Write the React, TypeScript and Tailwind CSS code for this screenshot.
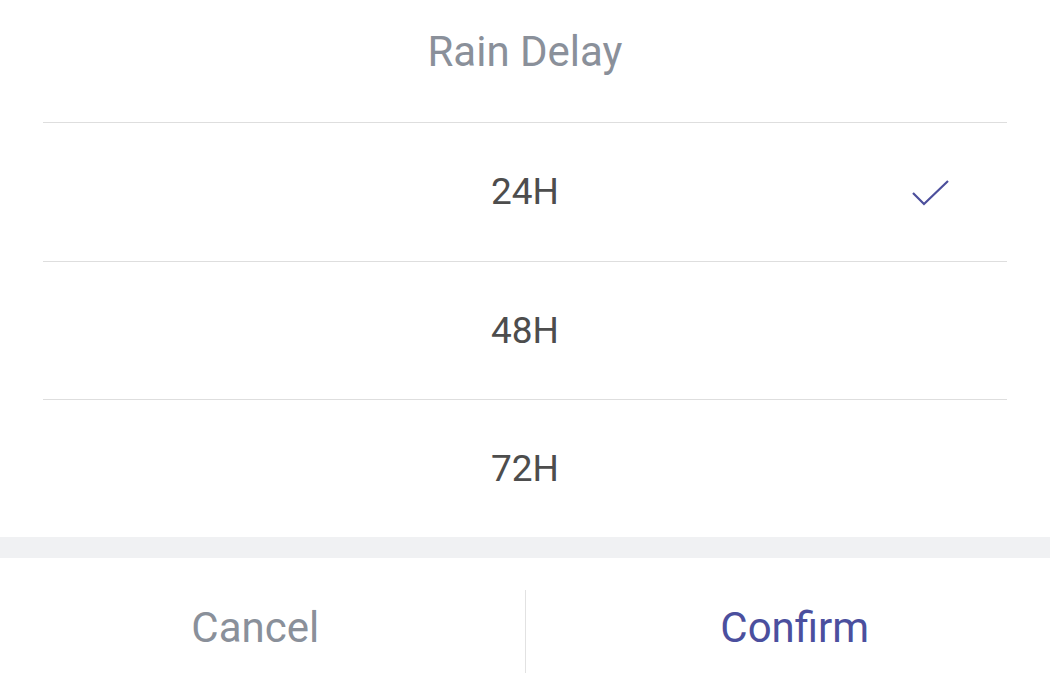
import React from "react";

const options = [
  { label: "24H", h: "h-[139px]" },
  { label: "48H", h: "h-[138px]" },
  { label: "72H", h: "h-[137px]" },
];

function Check() {
  return (
    <svg width="40" height="30" viewBox="0 0 40 30" className="text-[#4c4f9c]">
      <path d="M3 14 L14 25 L38 2" fill="none" stroke="currentColor" strokeWidth="2.2" />
    </svg>
  );
}

function OptionRow(props: { label: string; h: string; selected: boolean; last: boolean }) {
  return (
    <div
      className={`relative flex items-center justify-center ${props.h} ${
        props.last ? "" : "border-b border-[#dedede]"
      }`}
    >
      <span className="text-[37px] text-[#4d4d4d]">{props.label}</span>
      {props.selected ? (
        <div className="absolute right-[57px] top-[56px]">
          <Check />
        </div>
      ) : null}
    </div>
  );
}

export default function App() {
  const selected = "24H";

  return (
    <div
      className="flex h-[680px] w-[1050px] flex-col overflow-hidden bg-white"
      style={{ fontFamily: "Roboto, 'Liberation Sans', sans-serif" }}
    >
      <div className="mx-[43px] h-[123px] shrink-0 border-b border-[#dedede] pt-[28px] text-center">
        <span className="text-[42px] leading-[47px] text-[#8a909a]">Rain Delay</span>
      </div>
      <div className="mx-[43px] flex shrink-0 flex-col">
        {options.map((o, i) => (
          <OptionRow
            key={o.label}
            label={o.label}
            h={o.h}
            selected={o.label === selected}
            last={i === options.length - 1}
          />
        ))}
      </div>
      <div className="h-[21px] shrink-0 bg-[#f0f1f3]" />
      <div className="flex h-[122px] shrink-0 items-start">
        <button className="flex-1 pt-[46px] pr-[14px] text-center text-[42px] leading-[47px] text-[#8a909a]">
          Cancel
        </button>
        <div className="mt-[32px] h-[83px] w-px bg-[#e2e2e2]" />
        <button className="flex-1 pt-[46px] pl-[14px] text-center text-[42px] leading-[47px] text-[#4b4f9e]">
          Confirm
        </button>
      </div>
    </div>
  );
}
